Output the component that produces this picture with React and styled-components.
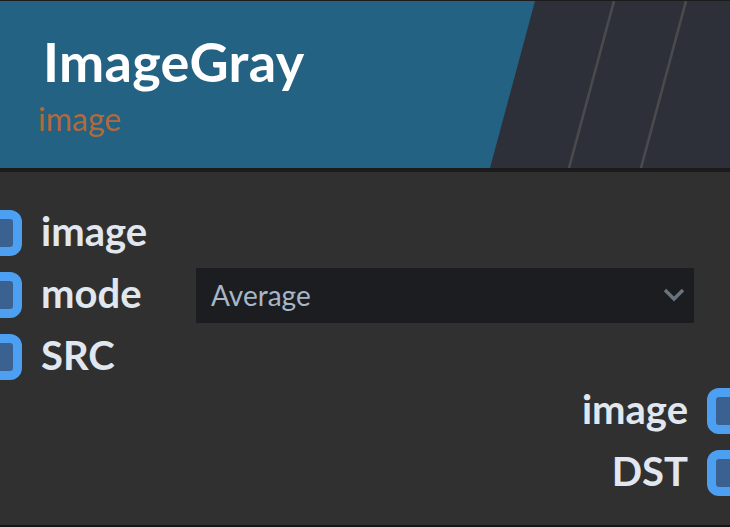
import React from "react";
import styled, { createGlobalStyle } from "styled-components";

const Global = createGlobalStyle`
  html, body { margin: 0; padding: 0; background: #181818; }
  body { width: 730px; height: 527px; overflow: hidden; font-family: Lato, "Noto Sans", sans-serif; }
`;

const Node = styled.div`
  width: 730px;
  height: 524px;
  border-top: 1px solid #1c1c1c;
  border-bottom: 2px solid #151515;
  background: #303030;
  display: flex;
  flex-direction: column;
  overflow: hidden;
`;

const Header = styled.header`
  position: relative;
  height: 167px;
  background: #2e3039;
  border-bottom: 4px solid #1b1b1b;
  flex: none;
  overflow: hidden;
`;

const HeaderArt = styled.svg`
  position: absolute;
  inset: 0;
  z-index: 0;
`;

const HeaderText = styled.div`
  position: relative;
  z-index: 1;
  display: flex;
  flex-direction: column;
  padding: 25px 0 0 38px;
`;

const Title = styled.h1`
  margin: 0 0 0 5px;
  font-family: Lato, sans-serif;
  font-weight: 700;
  font-size: 54px;
  line-height: 72px;
  color: #ffffff;
  letter-spacing: 0.3px;
`;

const Subtitle = styled.div`
  font-family: Lato, sans-serif;
  font-weight: 400;
  font-size: 32px;
  line-height: 36px;
  color: #b06a3c;
  margin-top: 3px;
`;

const Body = styled.div`
  flex: 1;
  display: flex;
  flex-direction: column;
  padding-top: 38px;
`;

const Section = styled.div`
  display: flex;
  flex-direction: column;
  gap: 16px;
  align-items: ${(p) => (p.$right ? "flex-end" : "stretch")};
  margin-top: ${(p) => (p.$right ? "8px" : "0")};
`;

const Row = styled.div`
  height: 46px;
  display: flex;
  align-items: center;
  gap: 19px;
`;

const Port = styled.div`
  flex: none;
  width: 46px;
  height: 46px;
  box-sizing: border-box;
  border: 9px solid #4d9ff2;
  border-radius: 12px;
  background: #3b6190;
  margin-left: ${(p) => (p.$side === "left" ? "-24px" : "0")};
  margin-right: ${(p) => (p.$side === "right" ? "-23px" : "0")};
`;

const Label = styled.span`
  font-family: Lato, sans-serif;
  font-weight: 700;
  font-size: 40px;
  color: #e1e7ef;
  width: ${(p) => (p.$w ? p.$w + "px" : "auto")};
  line-height: 46px;
  margin-top: -5px;
`;

const Select = styled.div`
  width: 498px;
  height: 55px;
  box-sizing: border-box;
  background: #1b1d21;
  display: flex;
  align-items: center;
  justify-content: space-between;
  padding: 0 9px 0 15px;
  flex: none;
`;

const SelectText = styled.span`
  font-family: Lato, sans-serif;
  font-size: 28px;
  color: #a8b7c7;
`;

const Chevron = () => (
  <svg width="22" height="14" viewBox="0 0 22 14">
    <path d="M2 2 L11 11 L20 2" fill="none" stroke="#6a737d" strokeWidth="3.4" />
  </svg>
);

export default function App() {
  return (
    <>
      <Global />
      <Node>
        <Header>
          <HeaderArt width="730" height="167" viewBox="0 0 730 167">
            <polygon points="0,0 535,0 490,167 0,167" fill="#236283" />
            <line x1="614" y1="0" x2="569" y2="167" stroke="#494a4e" strokeWidth="2.6" />
            <line x1="686" y1="0" x2="641" y2="167" stroke="#494a4e" strokeWidth="2.6" />
          </HeaderArt>
          <HeaderText>
            <Title>ImageGray</Title>
            <Subtitle>image</Subtitle>
          </HeaderText>
        </Header>
        <Body>
          <Section>
            <Row>
              <Port $side="left" />
              <Label $w={136}>image</Label>
            </Row>
            <Row>
              <Port $side="left" />
              <Label $w={136}>mode</Label>
              <Select>
                <SelectText>Average</SelectText>
                <Chevron />
              </Select>
            </Row>
            <Row>
              <Port $side="left" />
              <Label $w={136}>SRC</Label>
            </Row>
          </Section>
          <Section $right>
            <Row>
              <Label>image</Label>
              <Port $side="right" />
            </Row>
            <Row>
              <Label>DST</Label>
              <Port $side="right" />
            </Row>
          </Section>
        </Body>
      </Node>
    </>
  );
}
